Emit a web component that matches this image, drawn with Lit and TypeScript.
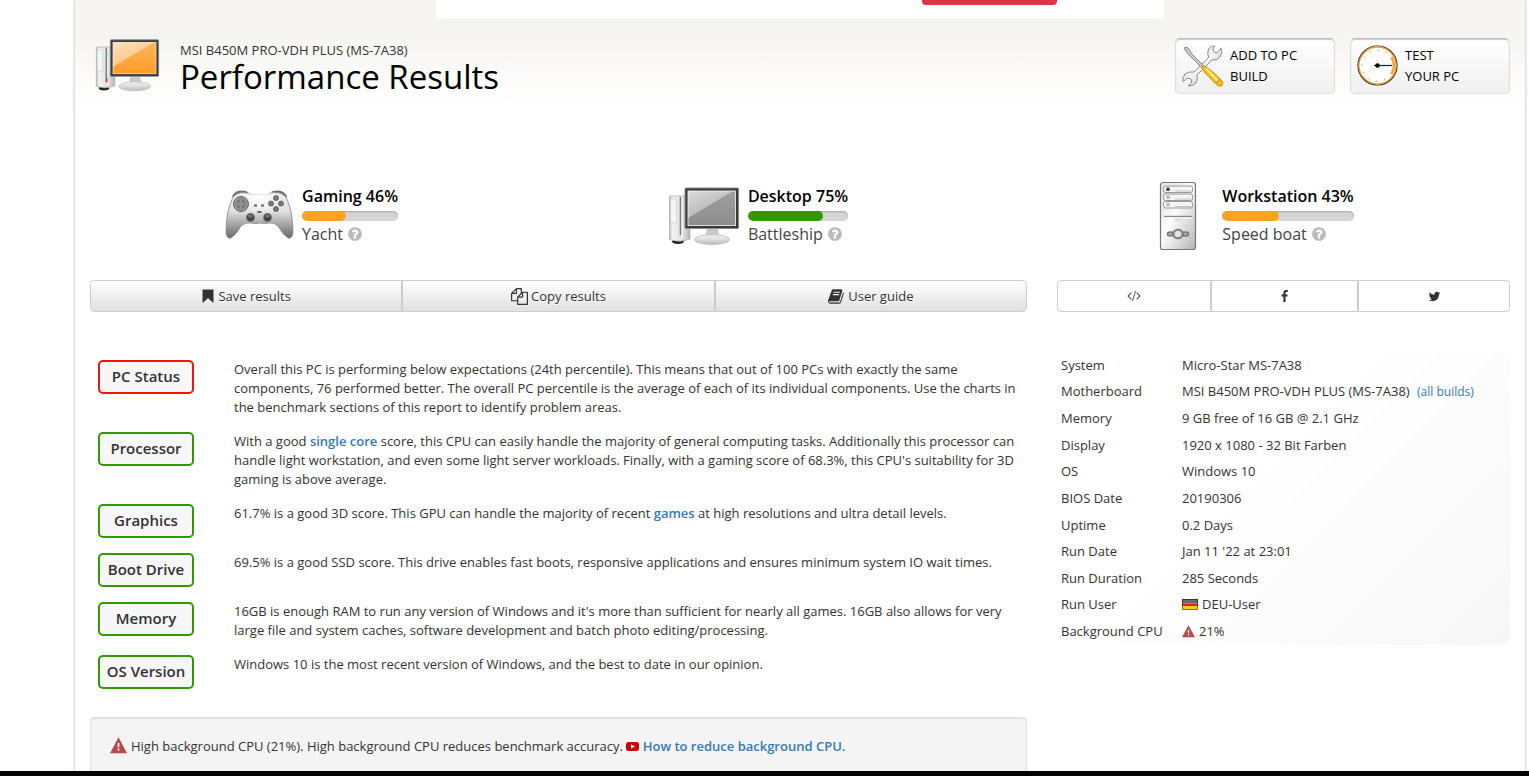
import { LitElement, html, css, svg, nothing } from "lit";
import { customElement, property } from "lit/decorators.js";

const GLYPHS: Record<string, string> = {
  book: "M1639 478q40 57 18 129l-275 906q-19 64-76.5 107.5t-122.5 43.5h-923q-77 0-148.5-53.5t-99.5-131.5q-24-67-2-127 0-4 3-27t4-37q1-8-3-21.5t-3-19.5q2-11 8-21t16.5-23.5 16.5-23.5q23-38 45-91.5t30-91.5q3-10 .5-30t-.5-28q3-11 17-28t17-23q21-36 42-92t25-90q1-9-2.5-32t.5-28q4-13 22-30.5t22-22.5q19-26 42.5-84.5t27.5-96.5q1-8-3-25.5t-2-26.5q2-8 9-18t18-23 17-21q8-12 16.5-30.5t15-35 16-36 19.5-32 26.5-23.5 36-11.5 47.5 5.5l-1 3q38-9 51-9h761q74 0 114 56t18 130l-274 906q-36 119-71.5 153.5t-128.5 34.5h-869q-27 0-38 15-11 16-1 43 24 70 144 70h923q29 0 56-15.5t35-41.5l300-987q7-22 5-57 38 15 59 43zm-1064 2q-4 13 2 22.5t20 9.5h608q13 0 25.5-9.5t16.5-22.5l21-64q4-13-2-22.5t-20-9.5h-608q-13 0-25.5 9.5t-16.5 22.5zm-83 256q-4 13 2 22.5t20 9.5h608q13 0 25.5-9.5t16.5-22.5l21-64q4-13-2-22.5t-20-9.5h-608q-13 0-25.5 9.5t-16.5 22.5z",
  copy: "M1696 384q40 0 68 28t28 68v1216q0 40-28 68t-68 28h-960q-40 0-68-28t-28-68v-288h-544q-40 0-68-28t-28-68v-672q0-40 20-88t48-76l408-408q28-28 76-48t88-20h416q40 0 68 28t28 68v328q68-40 128-40h416zm-544 213l-299 299h299v-299zm-640-384l-299 299h299v-299zm196 647l316-316v-416h-384v416q0 40-28 68t-68 28h-416v640h512v-256q0-40 20-88t48-76zm956 804v-1152h-384v416q0 40-28 68t-68 28h-416v640h896z",
  bookmark: "M192 64H1600V1780L896 1180L192 1780z",
  warning: "M896 20L1792 1700H0zM790 640L815 1090H977L1002 640zM800 1220V1420H992V1220z",
  help: "M1024 1376v-192q0-14-9-23t-23-9h-192q-14 0-23 9t-9 23v192q0 14 9 23t23 9h192q14 0 23-9t9-23zm256-672q0-88-55.5-163t-138.5-116-170-41q-243 0-371 213-15 24 8 42l132 100q7 6 19 6 16 0 25-12 53-68 86-92 34-24 86-24 48 0 85.5 26t37.5 59q0 38-20 61t-68 45q-63 28-115.5 86.5t-52.5 125.5v36q0 14 9 23t23 9h192q14 0 23-9t9-23q0-19 21.5-49.5t54.5-49.5q32-18 49-28.5t46-35 44.5-48 28-60.5 12.5-81zm384 192q0 209-103 385.5t-279.5 279.5-385.5 103-385.5-103-279.5-279.5-103-385.5 103-385.5 279.5-279.5 385.5-103 385.5 103 279.5 279.5 103 385.5z",
  facebook: "M1343 12v264h-157q-86 0-116 36t-30 108v189h293l-39 296h-254v759h-306v-759h-255v-296h255v-218q0-186 104-288.5t277-102.5q147 0 228 12z",
  twitter: "M1684 408q-67 98-162 167 1 14 1 42 0 130-38 259.5t-115.5 248.5-184.5 210.5-258 146-323 54.5q-271 0-496-145 35 4 78 4 225 0 401-138-105-2-188-64.5t-114-159.5q33 5 61 5 43 0 85-11-112-23-185.5-111.5t-73.5-205.5v-4q68 38 146 41-66-44-105-115t-39-154q0-88 44-163 121 149 294.5 238.5t371.5 99.5q-8-38-8-74 0-134 94.5-228.5t228.5-94.5q140 0 236 102 109-21 205-78-37 115-142 178 93-10 186-50z",
  code: "M520 420L600 500L220 896L600 1290L520 1372L50 896zM1272 420L1192 500L1572 896L1192 1290L1272 1372L1742 896zM1040 260L1140 290L752 1530L652 1500z",
};

@customElement("ui-glyph")
class UiGlyph extends LitElement {
  @property() name = "";
  @property({ type: Number }) size = 14;
  static styles = css`
    :host { display: inline-flex; flex: none; }
    svg { display: block; fill: currentColor; fill-rule: evenodd; overflow: visible; }
  `;
  render() {
    return html`<svg width=${this.size} height=${this.size} viewBox="0 0 1792 1792" aria-hidden="true"><path d=${GLYPHS[this.name]}></path></svg>`;
  }
}

/* Desktop tower with a monitor; the screen colour follows the tone. */
@customElement("pc-picture")
class PcPicture extends LitElement {
  @property() tone = "grey";
  @property({ type: Number }) width = 72;
  static styles = css`
    :host { display: inline-flex; flex: none; }
    svg { display: block; }
  `;
  render() {
    const orange = this.tone === "orange";
    return html`<svg width=${this.width} viewBox="0 0 72 60" aria-hidden="true">
      <defs>
        <linearGradient id="tower" x1="0" x2="1" y1="0" y2="0"><stop offset="0" stop-color="#bdbdbd"/><stop offset=".15" stop-color="#f4f4f4"/><stop offset=".7" stop-color="#dcdcdc"/><stop offset="1" stop-color="#b5b5b5"/></linearGradient>
        <linearGradient id="screen" x1="0" x2="0" y1="0" y2="1"><stop offset="0" stop-color=${orange ? "#ffb45c" : "#a0a0a0"}/><stop offset="1" stop-color=${orange ? "#ff9c26" : "#8c8c8c"}/></linearGradient>
        <linearGradient id="shine" x1="0" x2="1" y1="0" y2="1"><stop offset="0" stop-color="#fff" stop-opacity=".6"/><stop offset="1" stop-color="#fff" stop-opacity=".2"/></linearGradient>
        <linearGradient id="foot" x1="0" x2="0" y1="0" y2="1"><stop offset="0" stop-color="#fafafa"/><stop offset="1" stop-color="#bcbcbc"/></linearGradient>
      </defs>
      <ellipse cx="10" cy="55.500" rx="6" ry="2.600" fill="#222"/>
      <path d="M1.500 10H22V53Q12 57 1.500 53.500z" fill="url(#tower)" stroke="#b0b0b0" stroke-width=".8"/>
      <path d="M2.500 13H8.500V37H2.500z" fill="#f4f4f4" stroke="#c8c8c8" stroke-width=".6"/>
      <path d="M12.500 11V49" stroke="#777" stroke-width="1.600"/>
      <path d="M14 11V53" stroke="#fafafa" stroke-width="1"/>
      ${orange ? svg`<path d="M13 17v4" stroke="#4bc" stroke-width="1.500"/><path d="M13 44v5" stroke="#c33" stroke-width="1.500"/>` : nothing}
      <path d="M39 43H50L52 52H37z" fill="#c9c9c9"/>
      <ellipse cx="44" cy="53.500" rx="17.500" ry="5" fill="url(#foot)" stroke="#b9b9b9" stroke-width=".8"/>
      <ellipse cx="44" cy="51.500" rx="9" ry="2.200" fill="#e4e4e4"/>
      <rect x="17" y="2" width="53.500" height="40.500" rx="1" fill="#3a3a3a" stroke="#8a8a8a" stroke-width="1"/>
      <rect x="20" y="5" width="47.500" height="34.500" fill="url(#screen)" stroke=${orange ? "#ffdcae" : "#ddd"} stroke-width="1"/>
      <path d="M20 5H65L20 32z" fill="url(#shine)"/>
    </svg>`;
  }
}

@customElement("score-card")
class ScoreCard extends LitElement {
  @property() label = "";
  @property() rank = "";
  @property() color = "";
  @property({ type: Number }) value = 0;
  static styles = css`
    :host { display: flex; align-items: center; justify-content: center; gap: 8px; }
    .body { display: flex; flex-direction: column; margin-bottom: 2px; font-size: 16px; line-height: 24px; }
    .title { color: #000; font-weight: 600; }
    .track { height: 10px; margin: 3px 0 1px; border-radius: 5px; overflow: hidden; background: #d6d6d6; box-shadow: inset 0 1px 2px #a8a8a8; }
    .fill { height: 100%; border-radius: 5px; }
    .rank { display: flex; align-items: center; gap: 4px; color: #444; }
    .help { color: #bbb; display: flex; padding: 0; border: 0; background: none; }
  `;
  render() {
    return html`<slot></slot>
      <div class="body">
        <span class="title">${this.label} ${this.value}%</span>
        <div class="track"><div class="fill" style="width:${this.value}%;background:${this.color}"></div></div>
        <span class="rank">${this.rank}<button class="help" aria-label="About this rank"><ui-glyph name="help" size="16"></ui-glyph></button></span>
      </div>`;
  }
}

const GAMEPAD = html`<svg class="pic" width="72" height="60" viewBox="0 0 72 60" aria-hidden="true">
  <defs><linearGradient id="pad" x1="0" x2="0" y1="0" y2="1"><stop offset="0" stop-color="#ececec"/><stop offset=".4" stop-color="#e2e2e2"/><stop offset="1" stop-color="#686868"/></linearGradient>
  <radialGradient id="padlight" cx=".5" cy=".25" r=".6"><stop offset="0" stop-color="#fff"/><stop offset="1" stop-color="#fff" stop-opacity="0"/></radialGradient></defs>
  <path d="M10 10Q14 3 24 5L29 8H46L51 5Q61 3 65 10L63 14H13z" fill="#707070"/>
  <path d="M11 11Q18 4 27 8Q38 10 48 8Q57 4 64 11Q71 25 71 47Q70 53 66 52Q61 49 56 40Q52 36 47 37Q43 38 38 37Q33 38 29 37Q23 36 19 40Q14 49 9 52Q5 53 4 47Q4 25 11 11z" fill="url(#pad)" stroke="#858585" stroke-width=".8"/>
  <ellipse cx="38" cy="19" rx="24" ry="15" fill="url(#padlight)"/>
  <circle cx="19" cy="18" r="7.500" fill="#959595" stroke="#666"/><circle cx="19" cy="18" r="4.500" fill="#7d7d7d" stroke="#666" stroke-width=".7"/>
  <path d="M19 13v10M14 18h10" stroke="#999" stroke-width="1.200"/>
  <g fill="#777" stroke="#555" stroke-width=".6"><circle cx="54" cy="12" r="2.600"/><circle cx="49" cy="17.500" r="2.600"/><circle cx="59" cy="17.500" r="2.600"/><circle cx="54" cy="23" r="2.600"/></g>
  <path d="M32 19.500h3M39 19.500h3M35.500 26h4" stroke="#666" stroke-width="1.800"/>
  <g fill="#444" stroke="#8b8b8b"><circle cx="28.500" cy="31.500" r="4.200"/><circle cx="45.500" cy="31.500" r="4.200"/></g>
  <g fill="#777"><ellipse cx="28.500" cy="30" rx="2.600" ry="1.500"/><ellipse cx="45.500" cy="30" rx="2.600" ry="1.500"/></g>
</svg>`;

const SERVER = html`<svg class="pic" width="72" height="70" viewBox="0 0 72 70" aria-hidden="true">
  <defs><linearGradient id="case" x1="0" x2="1" y1="0" y2="1"><stop offset="0" stop-color="#e2e2e2"/><stop offset=".45" stop-color="#fbfbfb"/><stop offset="1" stop-color="#b4b4b4"/></linearGradient></defs>
  <rect x="18.500" y="1.500" width="35" height="67" rx="2.500" fill="url(#case)" stroke="#777" stroke-width="1.200"/>
  <g fill="#f4f4f4" stroke="#8e8e8e" stroke-width=".9"><rect x="21.500" y="5" width="29" height="6.500" rx="2"/><rect x="21.500" y="13" width="29" height="6.500" rx="2"/><rect x="21.500" y="20.500" width="29" height="6.500" rx="2"/></g>
  <circle cx="26" cy="8.200" r="1.900" fill="#444"/><circle cx="26" cy="16.200" r="1.900" fill="#bbb"/><circle cx="26" cy="23.700" r="1.900" fill="#bbb"/>
  <path d="M33 10h16M33 18h16M33 25.500h16" stroke="#c4c4c4"/>
  <path d="M22 35.500H50" stroke="#888" stroke-width="1.400"/><path d="M22 37H50" stroke="#fff"/>
  <path d="M31 37.500Q36 43 41 37.500" fill="#ddd"/>
  <g fill="#aaa" stroke="#777" stroke-width="1.600"><ellipse cx="28.500" cy="53" rx="3" ry="2"/><ellipse cx="43.500" cy="53" rx="3" ry="2"/><ellipse cx="36" cy="53" rx="5" ry="4.500"/></g><circle cx="36" cy="53" r="3" fill="#e4e4e4"/>
</svg>`;

const TOOLS = html`<svg width="42" height="42" viewBox="0 0 42 42" aria-hidden="true">
  <defs><linearGradient id="steel" x1="0" x2="1" y1="0" y2="1"><stop offset="0" stop-color="#c7c7c7"/><stop offset=".5" stop-color="#f4f4f4"/><stop offset="1" stop-color="#9a9a9a"/></linearGradient></defs>
  <path d="M33 1Q27 1 26 6Q25 10 27 12L12 27Q7 26 3 29Q0 33 1 37L5 33L9 34L10 37L6 41Q12 41 14 38Q16 34 15 30L30 15Q35 16 38 12Q41 8 39 3L35 8L32 7L31 4z" fill="url(#steel)" stroke="#8c8c8c" stroke-width="1"/>
  <path d="M2 3L5 2L8 5L9 8L22 21L20 23L7 10L5 8z" fill="#c8c8c8" stroke="#858585" stroke-width=".9"/>
  <path d="M20 24Q19 21 23 21L27 24Q33 28 40 36Q42 40 39 41Q36 42 34 39L23 28z" fill="#f9bd16" stroke="#c98d08" stroke-width=".9"/>
  <path d="M24 23.500L36 36" stroke="#ffe99b" stroke-width="2"/><path d="M34 38L38 34" stroke="#b98410"/>
</svg>`;

const GAUGE = html`<svg width="42" height="42" viewBox="0 0 42 42" aria-hidden="true">
  <circle cx="20.500" cy="20.500" r="19.500" fill="#fdfdfb" stroke="#3d3020" stroke-width="1.200"/>
  <circle cx="20.500" cy="20.500" r="18.500" fill="none" stroke="#f0a040" stroke-width="1.300"/>
  <path d="M34.500 12A17 17 0 0 1 34.500 29" fill="none" stroke="#ffa52e" stroke-width="2.600"/>
  <circle cx="20.500" cy="20.500" r="15.500" fill="none" stroke="#bbb" stroke-width="2" stroke-dasharray="1 7.100"/>
  <path d="M17 20.500H35" stroke="#222" stroke-width="1.200"/><circle cx="20.500" cy="20.500" r="2.300" fill="#000"/>
</svg>`;

const FLAG = html`<svg width="16" height="11" viewBox="0 0 16 11" aria-hidden="true">
  <path fill="#333" d="M0 0h16v4H0z"/><path fill="#e02818" d="M0 4h16v3H0z"/><path fill="#f8cc28" d="M0 7h16v4H0z"/>
  <path fill="#fff" opacity=".28" d="M1 1h14v4H1z"/><path fill="none" stroke="#553018" stroke-opacity=".6" d="M.5 .5h15v10H.5z"/>
</svg>`;

const YOUTUBE = html`<svg width="13" height="9" viewBox="0 0 13 9" aria-hidden="true"><rect width="13" height="9" rx="2.500" fill="#c00"/><path d="M5 2.300L9 4.500L5 6.700z" fill="#fff"/></svg>`;

const REPORT = [
  { name: "PC Status", bad: true, text: html`Overall this PC is performing below expectations (24th percentile). This means that out of 100 PCs with exactly the same components, 76 performed better. The overall PC percentile is the average of each of its individual components. Use the charts in the benchmark sections of this report to identify problem areas.` },
  { name: "Processor", text: html`With a good <a class="strong" href="#single-core">single core</a> score, this CPU can easily handle the majority of general computing tasks. Additionally this processor can handle light workstation, and even some light server workloads. Finally, with a gaming score of 68.3%, this CPU's suitability for 3D gaming is above average.` },
  { name: "Graphics", text: html`61.7% is a good 3D score. This GPU can handle the majority of recent <a class="strong" href="#games">games</a> at high resolutions and ultra detail levels.` },
  { name: "Boot Drive", text: html`69.5% is a good SSD score. This drive enables fast boots, responsive applications and ensures minimum system IO wait times.` },
  { name: "Memory", text: html`16GB is enough RAM to run any version of Windows and it's more than sufficient for nearly all games. 16GB also allows for very large file and system caches, software development and batch photo editing/processing.` },
  { name: "OS Version", text: html`Windows 10 is the most recent version of Windows, and the best to date in our opinion.` },
];

const SPECS: [string, unknown][] = [
  ["System", "Micro-Star MS-7A38"],
  ["Motherboard", html`MSI B450M PRO-VDH PLUS (MS-7A38) <a class="small" href="#builds">(all builds)</a>`],
  ["Memory", "9 GB free of 16 GB @ 2.1 GHz"],
  ["Display", "1920 x 1080 - 32 Bit Farben"],
  ["OS", "Windows 10"],
  ["BIOS Date", "20190306"],
  ["Uptime", "0.2 Days"],
  ["Run Date", "Jan 11 '22 at 23:01"],
  ["Run Duration", "285 Seconds"],
  ["Run User", html`<span class="inline">${FLAG} DEU-User</span>`],
  ["Background CPU", html`<span class="inline"><ui-glyph class="danger" name="warning" size="13"></ui-glyph> 21%</span>`],
];

@customElement("app-root")
class AppRoot extends LitElement {
  static styles = css`
    :host { display: flex; flex-direction: column; height: 100vh; overflow: hidden; background: #fff; color: #333; font: 13px/19px "Open Sans", "Noto Sans", sans-serif; }
    * { box-sizing: border-box; }
    button { font: inherit; color: inherit; cursor: pointer; }
    a { color: #337ab7; text-decoration: none; }
    svg { flex: none; }
    .page { flex: 1; min-height: 0; overflow: hidden; margin: 0 3px 0 74px; border: solid #ddd; border-width: 0 1px; padding: 0 15px; background: linear-gradient(#f5f4f0, #f5f4f0 30px, #fff 106px); box-shadow: 0 0 3px #ddd; }
    .ad { display: flex; justify-content: flex-end; width: 728px; height: 18px; margin: 0 auto 20px; padding-right: 107px; background: #fff; }
    .ad-action { width: 135px; height: 5px; border-radius: 0 0 4px 4px; background: #dc3545; }
    .head { display: flex; align-items: flex-start; gap: 15px; }
    .head-pic { margin: 0 5px; }
    .names { flex: 1; margin-top: 3px; }
    h1 { margin: 0; color: #000; font-size: 33px; line-height: 34px; font-weight: 400; }
    .action { display: flex; align-items: center; gap: 6px; width: 160px; height: 56px; padding: 0 6px; border: 1px solid #ddd; border-top-color: #bbb; border-radius: 5px; background: linear-gradient(#fff, #f0f0f0); box-shadow: inset 0 1px 1px #ccc; color: #000; line-height: 21px; text-align: left; }
    .scores { display: grid; grid-template-columns: 440fr 456fr 524fr; margin: 87px 0 29px; }
    .pic { display: block; }
    .columns { display: grid; grid-template-columns: 937fr 453fr; gap: 40px 30px; align-items: start; }
    .group { display: grid; border-radius: 4px; overflow: hidden; }
    .main { grid-template-columns: repeat(3, 1fr); }
    .share { grid-template-columns: 154fr 147fr 152fr; }
    .group button { display: flex; align-items: center; justify-content: center; gap: 3px; height: 32px; padding: 0; border: 1px solid #ccc; background: #fff; }
    .main button { background: linear-gradient(#fff, #e0e0e0); text-shadow: 0 1px 0 #fff; }
    .group button:first-child { border-radius: 4px 0 0 4px; }
    .group button:last-child { border-radius: 0 4px 4px 0; }
    .report { display: grid; grid-template-columns: 96px 1fr; gap: 15px 40px; align-items: start; margin: 0; padding: 8px 8px 0; }
    .report dt { height: 34px; border: 2px solid #390; border-radius: 5px; background: #f7f7f7; font-size: 15px; line-height: 28px; font-weight: 600; text-align: center; }
    .report dt.bad { border-color: #f01414; }
    .report dd { margin: 0; }
    .strong { font-weight: 600; }
    .well { margin-top: 28px; padding: 19px; height: 80px; border: 1px solid #e3e3e3; border-radius: 4px; background: #f4f4f4; box-shadow: inset 0 1px 1px #e0e0e0; display: flex; align-items: flex-start; gap: 4px; }
    .specs { width: 100%; height: 293px; border-collapse: collapse; border-radius: 10px; background: linear-gradient(135deg, #fff 40%, #f7f7f7); }
    .specs th, .specs td { padding: 0 4px; font-weight: 400; text-align: left; vertical-align: middle; }
    .specs th { width: 121px; }
    .small { margin-left: 4px; font-size: 12px; }
    .inline { display: flex; align-items: center; gap: 4px; }
    .danger { color: #b94a48; }
    .edge { height: 5px; background: #000; }
  `;
  render() {
    return html`
      <main class="page">
        <div class="ad"><div class="ad-action"></div></div>
        <header class="head">
          <pc-picture class="head-pic" tone="orange" width="65"></pc-picture>
          <div class="names"><div>MSI B450M PRO-VDH PLUS (MS-7A38)</div><h1>Performance Results</h1></div>
          <button class="action">${TOOLS}<span>ADD TO PC<br>BUILD</span></button>
          <button class="action">${GAUGE}<span>TEST<br>YOUR PC</span></button>
        </header>
        <section class="scores">
          <score-card label="Gaming" value="46" rank="Yacht" color="#ffa21f">${GAMEPAD}</score-card>
          <score-card label="Desktop" value="75" rank="Battleship" color="#339900"><pc-picture></pc-picture></score-card>
          <score-card label="Workstation" value="43" rank="Speed boat" color="#ffa21f">${SERVER}</score-card>
        </section>
        <div class="columns">
          <div class="group main">
            <button><ui-glyph name="bookmark" size="14"></ui-glyph>Save results</button>
            <button><ui-glyph name="copy" size="17"></ui-glyph>Copy results</button>
            <button><ui-glyph name="book" size="17"></ui-glyph>User guide</button>
          </div>
          <div class="group share">
            <button aria-label="Embed"><ui-glyph name="code" size="14"></ui-glyph></button>
            <button aria-label="Facebook"><ui-glyph name="facebook" size="13"></ui-glyph></button>
            <button aria-label="Twitter"><ui-glyph name="twitter" size="13"></ui-glyph></button>
          </div>
          <div>
            <dl class="report">
              ${REPORT.map((r) => html`<dt class=${r.bad ? "bad" : ""}>${r.name}</dt><dd>${r.text}</dd>`)}
            </dl>
            <div class="well"><ui-glyph class="danger" name="warning" size="17"></ui-glyph><span>High background CPU (21%). High background CPU reduces benchmark accuracy. ${YOUTUBE} <a class="strong" href="#reduce">How to reduce background CPU.</a></span></div>
          </div>
          <table class="specs"><tbody>
            ${SPECS.map(([k, v]) => html`<tr><th scope="row">${k}</th><td>${v}</td></tr>`)}
          </tbody></table>
        </div>
      </main>
      <div class="edge"></div>`;
  }
}
